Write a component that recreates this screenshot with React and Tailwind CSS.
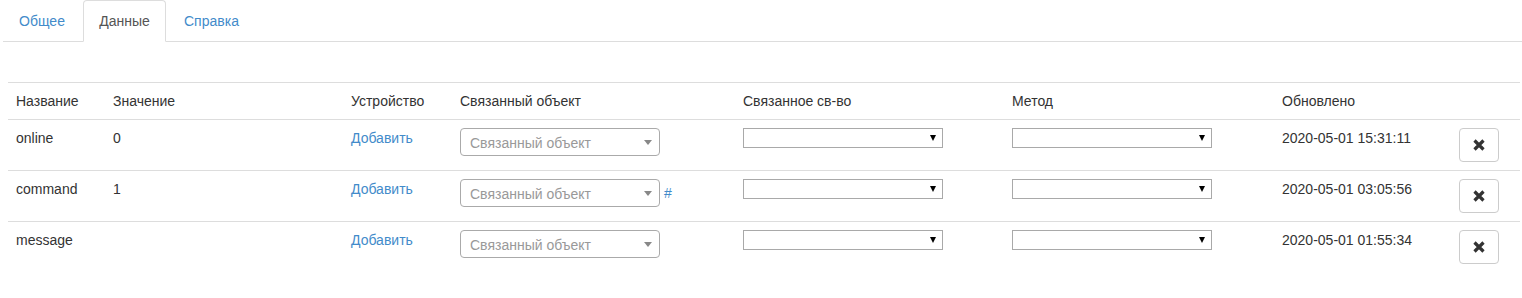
const rows = [
  { name: 'online', value: '0', hash: false, updated: '2020-05-01 15:31:11' },
  { name: 'command', value: '1', hash: true, updated: '2020-05-01 03:05:56' },
  { name: 'message', value: '', hash: false, updated: '2020-05-01 01:55:34' },
];

const cols = 'grid grid-cols-[97px_238px_109px_283px_269px_270px_177px_69px]';

function LinkedSelect() {
  return (
    <div className="flex items-center justify-between w-[200px] h-[28px] border border-[#aaa] rounded-[4px] bg-white pl-[9px] pr-[7px]">
      <span className="text-[#999] leading-[26px] pt-[2px]">Связанный объект</span>
      <span className="w-0 h-0 border-x-[4px] border-x-transparent border-t-[5px] border-t-[#888]" />
    </div>
  );
}

function PlainSelect() {
  return (
    <div className="flex items-center justify-end w-[200px] h-[20px] border border-[#a9a9a9] bg-white pr-[6px]">
      <span className="w-0 h-0 border-x-[3.5px] border-x-transparent border-t-[6px] border-t-black" />
    </div>
  );
}

function RemoveButton() {
  return (
    <button className="flex items-center justify-center w-[40px] h-[34px] border border-[#ccc] rounded-[4px] bg-white">
      <svg width="12" height="12" viewBox="0 0 12 12">
        <path d="M1.5 1.5 L10.5 10.5 M10.5 1.5 L1.5 10.5" stroke="#333" strokeWidth="3.2" strokeLinecap="butt" fill="none" />
      </svg>
    </button>
  );
}

export default function App() {
  return (
    <div className="bg-white text-[#333] text-[14px] leading-[20px] font-['Liberation_Sans',Arial,sans-serif] min-h-[298px]">
      {/* Tabs */}
      <div className="flex items-end gap-[2px] ml-[3px] h-[42px] border-b border-[#ddd]">
        <a className="w-[78px] text-center py-[10px] border border-transparent rounded-t-[4px] -mb-px text-[#428bca]">Общее</a>
        <a className="w-[83px] text-center py-[10px] border border-[#ddd] border-b-white rounded-t-[4px] -mb-px bg-white text-[#555]">Данные</a>
        <a className="px-[15px] py-[10px] border border-transparent rounded-t-[4px] -mb-px text-[#428bca]">Справка</a>
      </div>

      {/* Table */}
      <div className="ml-[8px] w-[1512px] mt-[40px]">
        <div className={`${cols} border-t border-[#ddd]`}>
          <div className="p-2">Название</div>
          <div className="p-2">Значение</div>
          <div className="p-2">Устройство</div>
          <div className="p-2">Связанный объект</div>
          <div className="p-2">Связанное св-во</div>
          <div className="p-2">Метод</div>
          <div className="p-2">Обновлено</div>
          <div className="p-2"></div>
        </div>
        {rows.map((r) => (
          <div key={r.name} className={`${cols} border-t border-[#ddd]`}>
            <div className="p-2">{r.name}</div>
            <div className="p-2">{r.value}</div>
            <div className="p-2">
              <a className="text-[#428bca]">Добавить</a>
            </div>
            <div className="p-2 flex items-start">
              <div className="flex items-center gap-[4px]">
                <LinkedSelect />
                {r.hash && <a className="text-[#428bca]">#</a>}
              </div>
            </div>
            <div className="p-2">
              <PlainSelect />
            </div>
            <div className="p-2">
              <PlainSelect />
            </div>
            <div className="p-2">{r.updated}</div>
            <div className="p-2">
              <RemoveButton />
            </div>
          </div>
        ))}
      </div>
    </div>
  );
}
